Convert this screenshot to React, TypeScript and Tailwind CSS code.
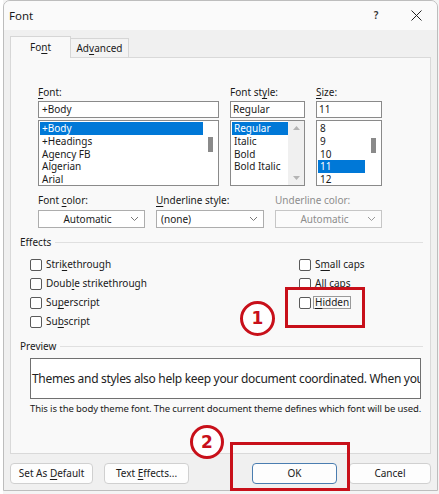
import React from "react";

const U = ({ c }: { c: string }) => (
  <span className="underline underline-offset-[1.5px] decoration-[1px]">{c}</span>
);

const Chevron = ({ color = "#555" }: { color?: string }) => (
  <svg width="9" height="6" viewBox="0 0 9 6" className="shrink-0">
    <path d="M1 1 L4.5 4.5 L8 1" fill="none" stroke={color} strokeWidth="1" />
  </svg>
);

const Check = ({ label }: { label: React.ReactNode }) => (
  <div className="h-[19px] flex items-center">
    <div className="w-[12px] h-[12px] border border-[#5a5a5a] rounded-[2px] bg-white shrink-0" />
    <div className="ml-[4px] leading-[13px]">{label}</div>
  </div>
);

export default function App() {
  const fonts = ["+Body", "+Headings", "Agency FB", "Algerian", "Arial"];
  const styles = ["Regular", "Italic", "Bold", "Bold Italic"];
  const sizes = ["8", "9", "10", "11", "12"];
  return (
    <div className="w-[439px] h-[494px] bg-[#f4f4f4] relative overflow-hidden font-['Noto_Sans',sans-serif] text-[10px] text-[#1a1a1a] flex">
      <div className="w-[3px] h-full bg-white shrink-0" />
      <div className="w-[435px] h-[491px] bg-[#f0f0f0] border border-[#bdbdbd] rounded-tl-[7px] rounded-tr-[7px] flex flex-col shrink-0 overflow-hidden">
        {/* Title bar */}
        <div className="h-[29px] bg-[#fafafa] flex items-center shrink-0">
          <div className="ml-[5px] text-[11.5px] leading-[14px] text-[#1a1a1a]">Font</div>
          <div className="flex-1" />
          <div className="w-[20px] text-center text-[10px] font-semibold text-[#333] mr-[25px]">?</div>
          <svg width="11" height="11" viewBox="0 0 11 11" className="mr-[15px]">
            <path d="M0.5 0.5 L10.5 10.5 M10.5 0.5 L0.5 10.5" stroke="#222" strokeWidth="1" />
          </svg>
        </div>
        {/* Tabs */}
        <div className="h-[27px] flex items-end pl-[6px] shrink-0">
          <div className="w-[61px] h-[22px] bg-[#f9f9f9] border border-b-0 border-[#d6d6d6] flex items-center justify-center -mb-[1px] relative z-10">
            <span className="leading-[13px]">Fo<U c="n" />t</span>
          </div>
          <div className="w-[58px] h-[19px] bg-[#f3f3f3] border border-b-0 border-l-0 border-[#d6d6d6] flex items-center justify-center">
            <span className="leading-[13px]">Ad<U c="v" />anced</span>
          </div>
        </div>
        {/* Panel */}
        <div className="ml-[6px] w-[421px] h-[397px] bg-[#f9f9f9] border border-[#d9d9d9] shrink-0 flex flex-col">
          {/* Lists row */}
          <div className="flex pl-[27px] mt-[28px] gap-[11px]">
            <div className="w-[181px] flex flex-col">
              <div className="leading-[13px] h-[13px]"><U c="F" />ont:</div>
              <div className="mt-[2px] h-[17px] bg-white border border-[#8a8a8a] flex items-center pl-[3px] leading-[13px]">+Body</div>
              <div className="mt-[2px] h-[66px] bg-white border border-[#8a8a8a] flex">
                <div className="flex-1 pt-[1px] pl-[1px]">
                  {fonts.map((f, i) => (
                    <div key={f} className={`h-[12.75px] leading-[12.75px] pl-[2px] ${i === 0 ? "bg-[#0078d7] text-white" : ""}`}>{f}</div>
                  ))}
                </div>
                <div className="w-[15px] flex justify-center">
                  <div className="w-[5px] h-[15px] mt-[16px] bg-[#8a8a8a]" />
                </div>
              </div>
            </div>
            <div className="w-[75px] flex flex-col">
              <div className="leading-[13px] h-[13px]">Font st<U c="y" />le:</div>
              <div className="mt-[2px] h-[17px] bg-white border border-[#8a8a8a] flex items-center pl-[2px] leading-[13px]">Regular</div>
              <div className="mt-[2px] h-[66px] bg-white border border-[#8a8a8a] flex">
                <div className="flex-1 pt-[1px] pl-[1px]">
                  {styles.map((f, i) => (
                    <div key={f} className={`h-[12.75px] leading-[12.75px] pl-[2px] ${i === 0 ? "bg-[#0078d7] text-white" : ""}`}>{f}</div>
                  ))}
                </div>
                <div className="w-[16px] bg-[#f0f0f0] flex flex-col items-center justify-between py-[5px]">
                  <svg width="7" height="4" viewBox="0 0 7 4"><path d="M0 4 L3.5 0 L7 4 Z" fill="#b4b4b4" /></svg>
                  <svg width="7" height="4" viewBox="0 0 7 4"><path d="M0 0 L3.5 4 L7 0 Z" fill="#b4b4b4" /></svg>
                </div>
              </div>
            </div>
            <div className="w-[66px] flex flex-col">
              <div className="leading-[13px] h-[13px]"><U c="S" />ize:</div>
              <div className="mt-[2px] h-[17px] bg-white border border-[#8a8a8a] flex items-center pl-[2px] leading-[13px]">11</div>
              <div className="mt-[2px] h-[66px] bg-white border border-[#8a8a8a] flex">
                <div className="flex-1 pt-[1px] pl-[1px]">
                  {sizes.map((f, i) => (
                    <div key={f} className={`h-[12.75px] leading-[12.75px] pl-[2px] ${i === 3 ? "bg-[#0078d7] text-white" : ""}`}>{f}</div>
                  ))}
                </div>
                <div className="w-[16px] flex justify-center">
                  <div className="w-[5px] h-[15px] mt-[17px] bg-[#8a8a8a]" />
                </div>
              </div>
            </div>
          </div>
          {/* Dropdowns row */}
          <div className="flex pl-[27px] mt-[8px] gap-[11px]">
            <div className="w-[107px] flex flex-col">
              <div className="leading-[13px] h-[13px]">Font <U c="c" />olor:</div>
              <div className="mt-[3px] h-[18px] bg-white border border-[#adadad] flex items-center pr-[5px]">
                <div className="flex-1 text-center leading-[13px] pl-[6px]">Automatic</div>
                <Chevron color="#777" />
              </div>
            </div>
            <div className="w-[108px] flex flex-col">
              <div className="leading-[13px] h-[13px]"><U c="U" />nderline style:</div>
              <div className="mt-[3px] h-[18px] bg-white border border-[#adadad] flex items-center pr-[5px] pl-[4px]">
                <div className="flex-1 leading-[13px]">(none)</div>
                <Chevron color="#777" />
              </div>
            </div>
            <div className="w-[107px] flex flex-col text-[#8d8d8d]">
              <div className="leading-[13px] h-[13px]">Underline color:</div>
              <div className="mt-[3px] h-[18px] bg-[#fbfbfb] border border-[#c6c6c6] flex items-center pr-[5px]">
                <div className="flex-1 text-center leading-[13px] pl-[6px]">Automatic</div>
                <Chevron color="#999" />
              </div>
            </div>
          </div>
          {/* Effects */}
          <div className="flex items-center pl-[9px] pr-[7px] mt-[8px] h-[13px]">
            <div className="leading-[13px]">Effects</div>
            <div className="flex-1 h-px bg-[#e0e0e0] ml-[4px]" />
          </div>
          <div className="flex mt-[6px] pl-[19px]">
            <div className="w-[269px] flex flex-col">
              <Check label={<>Stri<U c="k" />ethrough</>} />
              <Check label={<>Doub<U c="l" />e strikethrough</>} />
              <Check label={<>Su<U c="p" />erscript</>} />
              <Check label={<>Su<U c="b" />script</>} />
            </div>
            <div className="flex flex-col">
              <Check label={<>S<U c="m" />all caps</>} />
              <Check label={<><U c="A" />ll caps</>} />
              <div className="h-[19px] flex items-center">
                <div className="w-[12px] h-[12px] border border-[#5a5a5a] rounded-[2px] bg-white shrink-0" />
                <div className="ml-[2px] leading-[11px] px-[1px] border border-[#9a9a9a]"><U c="H" />idden</div>
              </div>
            </div>
          </div>
          {/* Preview */}
          <div className="flex items-center pl-[9px] pr-[7px] mt-[9px] h-[13px]">
            <div className="leading-[13px]">Preview</div>
            <div className="flex-1 h-px bg-[#e0e0e0] ml-[4px]" />
          </div>
          <div className="ml-[19px] mt-[5px] w-[391px] h-[41px] bg-white border border-[#707070] overflow-hidden flex items-center pl-[1px]">
            <div className="whitespace-nowrap text-[12px] tracking-[-0.3px] leading-[16px] text-[#222]">Themes and styles also help keep your document coordinated. When your</div>
          </div>
          <div className="ml-[19px] mt-[3px] leading-[13px] whitespace-nowrap text-[9.5px] tracking-[-0.1px]">This is the body theme font. The current document theme defines which font will be used.</div>
        </div>
        {/* Buttons */}
        <div className="flex mt-[9px] pl-[6px] shrink-0">
          <div className="w-[83px] h-[21px] bg-[#fdfdfd] border border-[#d0d0d0] rounded-[4px] flex items-center justify-center">
            <span className="leading-[13px]">Set As <U c="D" />efault</span>
          </div>
          <div className="ml-[11px] w-[85px] h-[21px] bg-[#fdfdfd] border border-[#d0d0d0] rounded-[4px] flex items-center justify-center">
            <span className="leading-[13px]">Text <U c="E" />ffects...</span>
          </div>
          <div className="ml-[63px] w-[85px] h-[21px] bg-[#fdfdfd] border border-[#4a7db0] rounded-[4px] flex items-center justify-center">
            <span className="leading-[13px]">OK</span>
          </div>
          <div className="ml-[12px] w-[82px] h-[21px] bg-[#fdfdfd] border border-[#d0d0d0] rounded-[4px] flex items-center justify-center">
            <span className="leading-[13px]">Cancel</span>
          </div>
        </div>
      </div>

      {/* Red annotations */}
      <div className="absolute left-[285px] top-[287px] w-[80px] h-[41px] border-[3px] border-[#c8101a]" />
      <div className="absolute left-[240px] top-[301px] w-[35px] h-[35px] rounded-full border-[3px] border-[#c8101a] bg-white flex items-center justify-center">
        <span className="font-['DejaVu_Sans',sans-serif] font-bold text-[17px] leading-none text-[#c8101a]">1</span>
      </div>
      <div className="absolute left-[230px] top-[442px] w-[120px] h-[49px] border-[3px] border-[#c8101a]" />
      <div className="absolute left-[190px] top-[425px] w-[34px] h-[34px] rounded-full border-[3px] border-[#c8101a] bg-white flex items-center justify-center">
        <span className="font-['DejaVu_Sans',sans-serif] font-bold text-[17px] leading-none text-[#c8101a]">2</span>
      </div>
    </div>
  );
}
